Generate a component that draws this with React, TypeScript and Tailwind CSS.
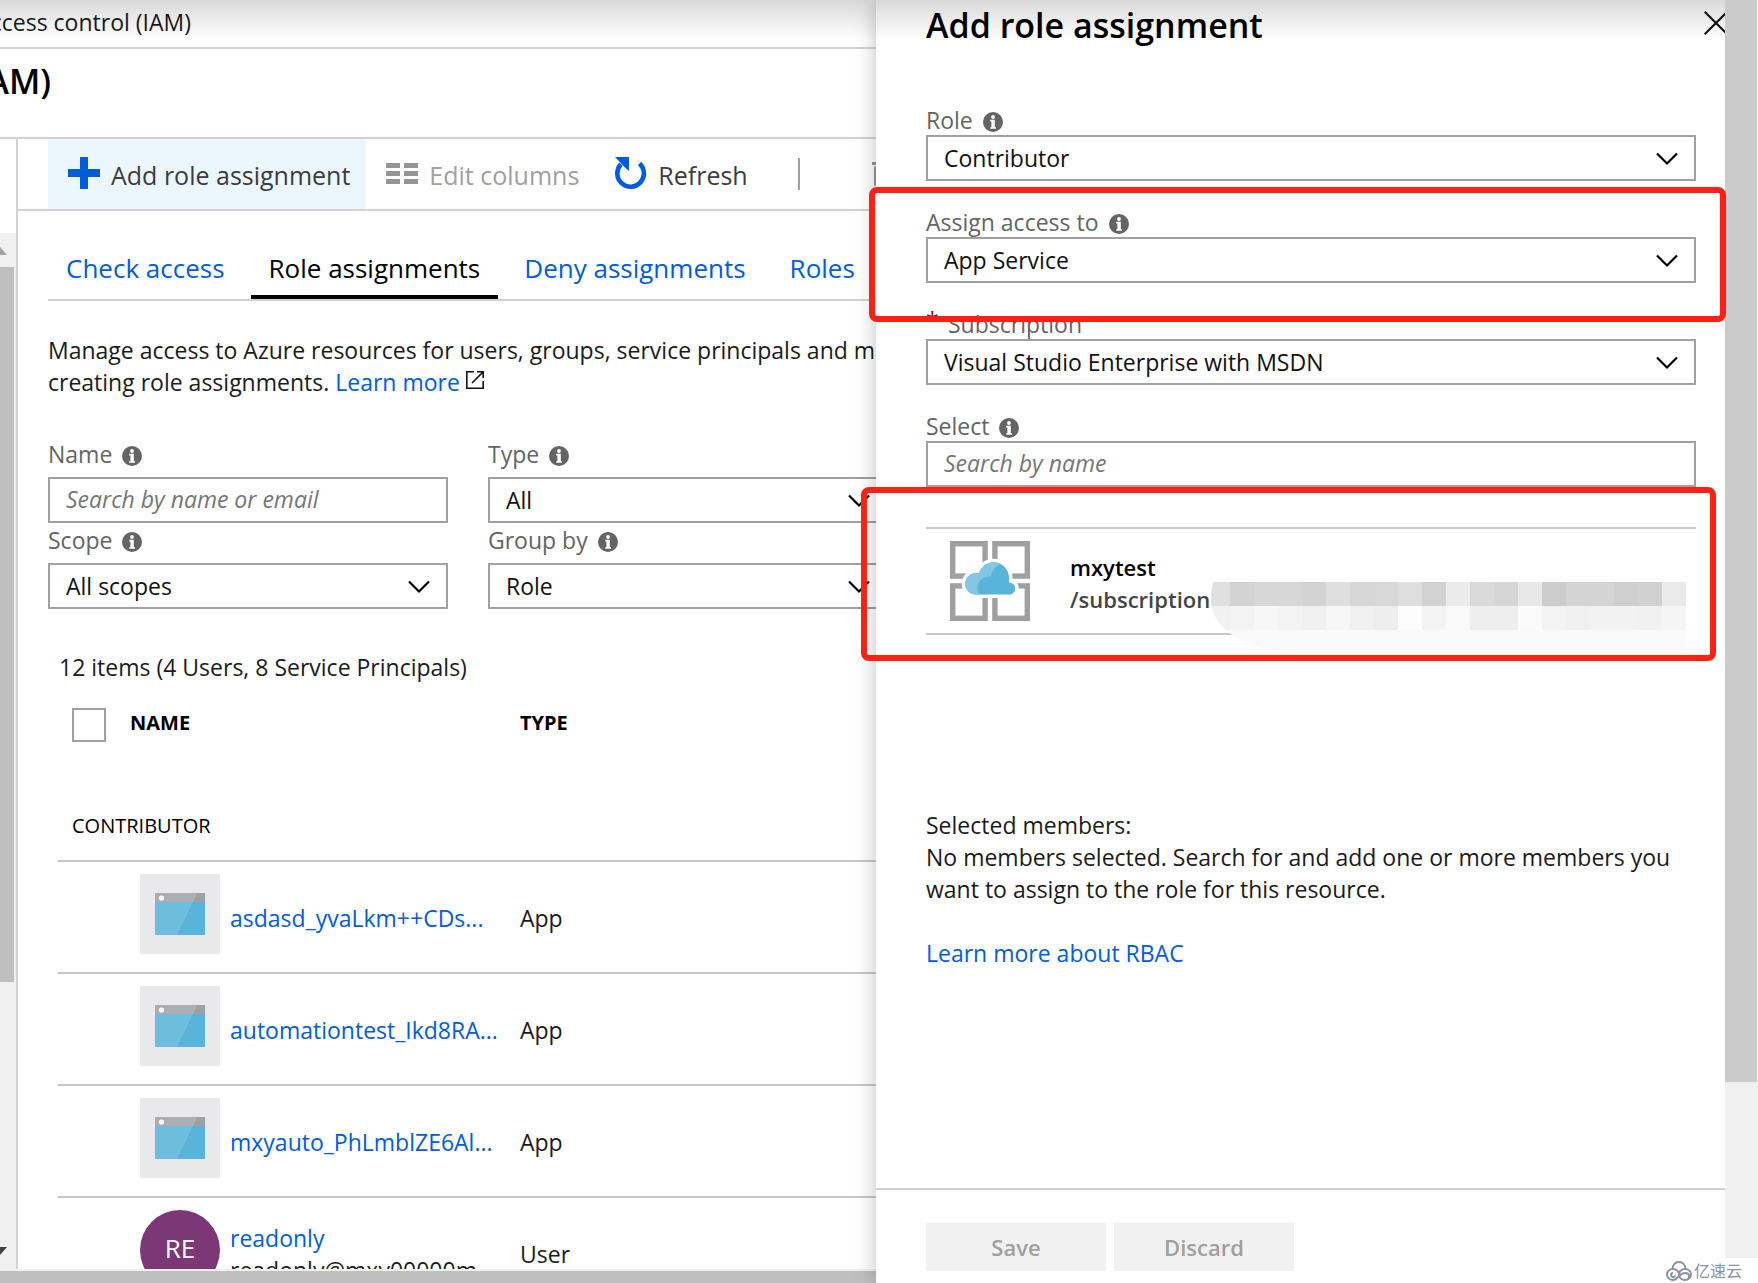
import React, { useState } from 'react';

interface FieldProps {
  id: string;
  label: string;
  info?: boolean;
  required?: boolean;
  labelClass: string;
  children: React.ReactNode;
}

interface Member {
  name: string;
  detail?: string;
  initials?: string;
  type: string;
}

const MEMBERS: Member[] = [
  { name: 'asdasd_yvaLkm++CDs...', type: 'App' },
  { name: 'automationtest_Ikd8RA...', type: 'App' },
  { name: 'mxyauto_PhLmblZE6Al...', type: 'App' },
  { name: 'readonly', detail: 'readonly@mxy00000m...', initials: 'RE', type: 'User' },
];

const TABS = ['Check access', 'Role assignments', 'Deny assignments', 'Roles'];

// Grey levels of the masked id, one row of blocks each
const MASK_TOP = ['#e0e0e0', '#d3d3d3', '#d7d7d7', '#d7d7d7', '#d3d3d3', '#dfdfdf', '#d7d7d7', '#d8d8d8', '#dedede', '#d2d2d2', '#ebebeb', '#dadada', '#d6d6d6', '#e8e8e8', '#cdcdcd', '#d4d4d4', '#d4d4d4', '#cfcfcf', '#d1d1d1', '#eaeaea'];
const MASK_BOTTOM = ['#f1f1f1', '#f3f3f3', '#f7f7f7', '#f4f4f4', '#f0f0f0', '#f6f6f6', '#f1f1f1', '#eeeeee', '#fdfdfd', '#f3f3f3', '#f9f9f9', '#eeeeee', '#eeeeee', '#fbfbfb', '#f3f3f3', '#f0f0f0', '#f2f2f2', '#f2f2f2', '#f1f1f1', '#f5f5f5'];

const InfoIcon = () => (
  <svg className="h-5 w-5 shrink-0" viewBox="0 0 20 20" aria-hidden="true">
    <circle cx="10" cy="10" r="10" fill="#646464" />
    <circle cx="10" cy="5" r="1.9" fill="#fff" />
    <path d="M7.200 7.800h4.600v7.400H13v1.600H7.200v-1.600h1.200V9.400H7.200z" fill="#fff" />
  </svg>
);

const Chevron = () => (
  <svg className="pointer-events-none absolute top-[17px] right-[18px] h-[14px] w-[22px]" viewBox="0 0 22 14" fill="none" aria-hidden="true">
    <path d="M1 1.5 11 11.5 21 1.5" stroke="#000" strokeWidth="2.2" />
  </svg>
);

const Field: React.FC<FieldProps> = ({ id, label, info = true, required, labelClass, children }) => (
  <div>
    <label htmlFor={id} className={`flex text-[#646464] ${labelClass}`}>
      {required && <span className="w-[22px] leading-5 text-[#a80000]">*</span>}
      <span className="mr-[10px] leading-7">{label}</span>
      {info && <span className="flex h-7 items-center pt-1"><InfoIcon /></span>}
    </label>
    {children}
  </div>
);

const Dropdown: React.FC<{ id: string; options: string[] }> = ({ id, options }) => (
  <div className="relative">
    <select id={id} className="block h-[46px] w-full appearance-none rounded-none border-2 border-[#a0a0a0] bg-white pr-12 pb-px pl-4 text-[#111]">
      {options.map(o => <option key={o}>{o}</option>)}
    </select>
    <Chevron />
  </div>
);

const SearchBox: React.FC<{ id: string; placeholder: string }> = ({ id, placeholder }) => (
  <input
    id={id}
    type="text"
    placeholder={placeholder}
    className="block h-[46px] w-full border-2 border-[#a0a0a0] bg-white px-4 pb-[3px] text-[#111] outline-none placeholder:text-[#767676] placeholder:italic"
  />
);

const AppIcon = () => (
  <svg className="h-20 w-20" viewBox="0 0 80 80" aria-hidden="true">
    <rect width="80" height="80" fill="#e9e9eb" />
    <rect x="15" y="19" width="50" height="42" rx="1" fill="#59b4d9" />
    <path d="M15 28V20q0-1 1-1h48q1 0 1 1v8z" fill="#a0a1a2" />
    <path d="M15 28h38L37 61H16q-1 0-1-1z" fill="#fff" opacity=".12" />
    <path d="M15 28v-8q0-1 1-1h41l-4 9z" fill="#fff" opacity=".14" />
    <circle cx="21.500" cy="24" r="2.600" fill="#fff" />
  </svg>
);

const AppServiceIcon = () => (
  <svg className="h-20 w-20 shrink-0" viewBox="0 0 80 80" aria-hidden="true">
    <g fill="none" stroke="#a0a0a0" strokeWidth="5.4">
      <rect x="2.700" y="2.700" width="32.400" height="32.400" />
      <rect x="44.900" y="2.700" width="32.400" height="32.400" />
      <rect x="2.700" y="44.900" width="32.400" height="32.400" />
      <rect x="44.900" y="44.900" width="32.400" height="32.400" />
    </g>
    <path
      d="M25 53.500A10.700 10.700 0 1 1 29 32.600C31 25.500 37 21.200 43.500 21.200 52 21.200 59 28 59 36.500V41.500C62.500 41.500 65.300 44 65.300 47.500S62.500 53.500 59.500 53.500Z"
      fill="#59b4d9"
      stroke="#fff"
      strokeWidth="7"
      paintOrder="stroke"
    />
    <path d="M25 53.500A10.700 10.700 0 1 1 29 32.600C31 25.500 37 21.200 43.500 21.200 46 21.200 48.500 21.900 50.500 23 45 25.500 41.500 30 41.200 35.500 33 35 27.500 40 27.500 46.500 27.500 49.500 28.500 52 30 53.500Z" fill="#84c7e2" />
  </svg>
);

const MaskedId = () => (
  <svg className="absolute top-[53px] left-[285px] h-[72px] w-[485px]" viewBox="5 0 485 72" aria-hidden="true">
    <clipPath id="mask-edge">
      <path d="M7 0H490V72H90C45 68 5 50 5 18Q5 8 7 0Z" />
    </clipPath>
    <g clipPath="url(#mask-edge)">
      {MASK_TOP.map((c, i) => <rect key={i} x={i * 24} y="0" width="24" height="24" fill={c} shapeRendering="crispEdges" />)}
      {MASK_BOTTOM.map((c, i) => <rect key={i} x={i * 24} y="24" width="24" height="24" fill={c} shapeRendering="crispEdges" />)}
      <rect y="48" width="480" height="18" fill="#fafafa" />
      <rect y="66" width="480" height="6" fill="#fdfdfd" />
      <rect x="480" y="48" width="10" height="18" fill="#fefefe" />
    </g>
  </svg>
);

const Avatar: React.FC<{ initials?: string }> = ({ initials }) =>
  initials ? (
    <span className="flex h-20 w-20 items-center justify-center rounded-full bg-[#7c3776] pb-1 text-[26px] text-white">{initials}</span>
  ) : (
    <AppIcon />
  );

const Toolbar = () => (
  <div className="flex h-[72px] items-stretch border-b-2 border-[#d2d2d2] pl-[30px] text-[25px] text-[#3c3c3c]">
    <button className="flex shrink-0 items-center gap-[11px] bg-[#ebf6fd] pt-[2px] pr-4 pl-5">
      <svg className="mb-1 h-8 w-8" viewBox="0 0 32 32" aria-hidden="true">
        <path d="M12 0h8v12h12v8H20v12h-8V20H0v-8h12z" fill="#015cda" />
      </svg>
      Add role assignment
    </button>
    <button disabled className="flex shrink-0 items-center gap-[11px] pt-[2px] pr-4 pl-5 text-[#a0a0a0]">
      <svg className="mb-1 h-[21px] w-8" viewBox="0 0 32 21" fill="#969696" aria-hidden="true">
        <path d="M0 0h14v5H0zM18 0h14v5H18zM0 8h14v5H0zM18 8h14v5H18zM0 16h14v5H0zM18 16h14v5H18z" />
      </svg>
      Edit columns
    </button>
    <button className="flex shrink-0 items-center gap-[11px] pt-[2px] pr-4 pl-5">
      <svg className="mb-1 h-8 w-8" viewBox="0 0 32 32" fill="none" aria-hidden="true">
        <path d="M24.500 6.500A13.300 13.300 0 1 1 6 7.200" stroke="#015cda" strokeWidth="4.600" />
        <path d="M0 0h14v14L9 9.500z" fill="#015cda" />
      </svg>
      Refresh
    </button>
    <span className="my-[19px] ml-[34px] w-[2px] shrink-0 bg-[#a0a0a0]" />
    <button disabled className="ml-[72px] flex shrink-0 items-center" aria-label="Remove">
      <svg className="h-6 w-6" viewBox="0 0 24 24" fill="none" stroke="#969696" strokeWidth="3" aria-hidden="true">
        <path d="M0 1.500h24M3.500 4.500V22h17V4.500" />
      </svg>
    </button>
  </div>
);

const NavScrollbar = () => (
  <div className="flex w-[18px] shrink-0 flex-col border-r-2 border-[#d2d2d2] pt-[94px]">
    <div className="flex min-h-0 flex-1 flex-col bg-[#f0f0f0]">
      <svg className="mt-[14px] h-2 w-[7px] shrink-0" viewBox="0 0 7 8" aria-hidden="true"><path d="M0 0 7 8H0z" fill="#a0a0a0" /></svg>
      <span className="mt-3 mr-[2px] h-[69%] bg-[#bfbfbf]" />
      <svg className="mt-auto mb-[14px] h-2 w-[7px] shrink-0" viewBox="0 0 7 8" aria-hidden="true"><path d="M0 0h7L0 8z" fill="#444" /></svg>
    </div>
  </div>
);

const RoleAssignments = () => {
  const [tab, setTab] = useState('Role assignments');

  return (
    <main className="flex min-w-0 flex-1 flex-col overflow-hidden whitespace-nowrap">
      <div className="flex h-[49px] shrink-0 items-center border-b-2 border-[#d2d2d2] pb-1">
        <div className="flex w-[191px] justify-end">Access control (IAM)</div>
      </div>
      <div className="flex h-[90px] shrink-0 items-start border-b-2 border-[#d2d2d2] pt-2">
        <h1 className="flex w-[51px] justify-end text-[34px] leading-[48px] font-semibold text-black">Access control (IAM)</h1>
      </div>

      <div className="flex min-h-0 flex-1">
        <NavScrollbar />
        <div className="min-w-0 flex-1 overflow-hidden">
          <Toolbar />
          <div className="w-[1100px] pt-[30px] pl-[30px]">
            <div className="flex h-[60px] gap-2 border-b-2 border-[#d2d2d2] text-[26px]" role="tablist">
              {TABS.map(t => (
                <button
                  key={t}
                  role="tab"
                  aria-selected={t === tab}
                  onClick={() => setTab(t)}
                  className={`border-b-4 px-[18px] ${t === tab ? 'border-black text-black' : 'border-transparent text-[#015cda]'}`}
                >
                  {t}
                </button>
              ))}
            </div>

            <p className="mt-[33px]">
              Manage access to Azure resources for users, groups, service principals and managed identities
              <br />
              creating role assignments. <a href="#learn" className="text-[#015cda]">Learn more
                <svg className="ml-[6px] inline h-[18px] w-[18px] align-[2px]" viewBox="0 0 18 18" fill="none" stroke="#111" strokeWidth="1.600" aria-hidden="true">
                  <path d="M8 .8H.8v16.400h16.400V10M6 12 17 1M11 .8h6.200V7" />
                </svg>
              </a>
            </p>

            <div className="mt-[39px] grid grid-cols-[400px_400px] gap-x-10">
              <Field id="name" label="Name" labelClass="h-10 pt-[3px]"><SearchBox id="name" placeholder="Search by name or email" /></Field>
              <Field id="type" label="Type" labelClass="h-10 pt-[3px]"><Dropdown id="type" options={['All']} /></Field>
              <Field id="scope" label="Scope" labelClass="h-10 pt-[3px]"><Dropdown id="scope" options={['All scopes']} /></Field>
              <Field id="group" label="Group by" labelClass="h-10 pt-[3px]"><Dropdown id="group" options={['Role']} /></Field>
            </div>

            <p className="mt-[42px] mb-[2px] pl-[11px]">12 items (4 Users, 8 Service Principals)</p>

            <table className="ml-[10px] w-full table-fixed border-collapse text-left">
              <colgroup>
                <col className="w-[72px]" />
                <col className="w-[390px]" />
                <col />
              </colgroup>
              <thead>
                <tr className="h-20 text-[20px] text-black">
                  <th className="pl-[14px]">
                    <input type="checkbox" aria-label="Select all" className="block h-[34px] w-[34px] appearance-none border-2 border-[#a0a0a0] bg-white checked:bg-[#015cda]" />
                  </th>
                  <th className="pb-1 font-bold">NAME</th>
                  <th className="pb-1 font-bold">TYPE</th>
                </tr>
              </thead>
              <tbody>
                <tr className="h-24 border-b-2 border-[#c8c8c8]">
                  <th colSpan={3} className="pt-[26px] pl-[14px] text-[20px] font-medium text-black">CONTRIBUTOR</th>
                </tr>
                {MEMBERS.map(m => (
                  <tr key={m.name} className="h-[112px] border-b-2 border-[#c8c8c8]">
                    <td />
                    <td className="p-0">
                      <div className="flex items-center gap-[10px] pl-[10px]">
                        <div className="mb-[6px]"><Avatar initials={m.initials} /></div>
                        <div className="pt-[2px]">
                          <a href="#member" className="block text-[#015cda]">{m.name}</a>
                          {m.detail && <div>{m.detail}</div>}
                        </div>
                      </div>
                    </td>
                    <td className="p-0 pt-[2px]">{m.type}</td>
                  </tr>
                ))}
              </tbody>
            </table>
          </div>
        </div>
      </div>

      <div className="h-[14px] shrink-0 border-t-2 border-[#f0f0f0] bg-[#bfbfbf]" />
    </main>
  );
};

const AddRolePanel = () => (
  <aside className="relative z-10 flex shrink-0 basis-[882px] shadow-[0_0_20px_rgba(0,0,0,0.25)]">
    <div className="flex min-w-0 flex-1 flex-col bg-white">
      <header className="flex h-[52px] shrink-0 items-center justify-between overflow-hidden pb-[2px] pl-[50px]">
        <h2 className="text-[34px] font-semibold text-black">Add role assignment</h2>
        <button aria-label="Close" className="-mr-[3px] mb-1">
          <svg className="h-6 w-6" viewBox="0 0 24 24" stroke="#111" strokeWidth="2" aria-hidden="true"><path d="M.7.7 23.300 23.300M23.300.7.7 23.300" /></svg>
        </button>
      </header>

      <div className="flex flex-col pt-[51px] pr-[29px] pl-[50px]">
        <div className="flex flex-col gap-6">
          <Field id="role" label="Role" labelClass="h-8 pt-[3px]"><Dropdown id="role" options={['Contributor']} /></Field>
          <div className="relative">
            <Field id="assign" label="Assign access to" labelClass="h-8 pt-[3px]"><Dropdown id="assign" options={['App Service']} /></Field>
            <div className="pointer-events-none absolute -top-[18px] -right-[30px] -bottom-[39px] -left-[57px] z-10 rounded-lg border-[6px] border-[#fd2015]" />
          </div>
          <Field id="subscription" label="Subscription" info={false} required labelClass="h-8 pt-[3px]">
            <Dropdown id="subscription" options={['Visual Studio Enterprise with MSDN']} />
          </Field>
          <Field id="select" label="Select" labelClass="h-8 pt-[3px]"><SearchBox id="select" placeholder="Search by name" /></Field>
        </div>

        <div className="relative mt-10 flex h-[108px] items-center border-y-2 border-[#c8c8c8] pl-6">
          <AppServiceIcon />
          <div className="pt-1 pl-10 text-[22px] leading-8 font-semibold">
            <div className="text-black">mxytest</div>
            <div className="text-[#444]">/subscription</div>
          </div>
          <MaskedId />
          <div className="pointer-events-none absolute -top-[42px] -right-[20px] -bottom-[28px] -left-[65px] rounded-lg border-[6px] border-[#fd2015]" />
        </div>

        <div className="mt-[174px]">
          <p>Selected members:</p>
          <p>No members selected. Search for and add one or more members you want to assign to the role for this resource.</p>
          <a href="#rbac" className="mt-8 inline-block text-[#015cda]">Learn more about RBAC</a>
        </div>
      </div>

      <footer className="mt-auto flex gap-2 border-t-2 border-[#d2d2d2] pt-[33px] pb-3 pl-[50px] text-[22px] font-semibold text-[#a0a0a0]">
        <button disabled className="h-12 w-[180px] bg-[#f1f1f1]">Save</button>
        <button disabled className="h-12 w-[180px] bg-[#f1f1f1]">Discard</button>
      </footer>
    </div>

    <div className="mb-[25px] w-[33px] shrink-0 bg-[#f0f0f0] pr-px">
      <div className="h-[86%] bg-[#cbcbcb]" />
    </div>

    {/* Watermark */}
    <div className="absolute right-4 bottom-0 flex items-center gap-[2px] text-[16px] leading-6 text-[#8a92a3]">
      <svg className="h-5 w-[26px]" viewBox="0 0 26 20" fill="none" stroke="#8a92a3" strokeWidth="2" aria-hidden="true">
        <path d="M6.500 8.500C6.500 4 9 1 13 1s6.500 3 6.500 7.500" />
        <path d="M13 13.500C13 10.500 10.500 8 7 8S1 10.500 1 13.500 3.500 19 7 19c5 0 6-7 12-7 5 0 6 7 0 7-3.500 0-6-2.500-6-5.500S15.500 8 19 8s6 2.500 6 5.500-2.500 5.500-6 5.500" />
        <path d="M7 12a2 2 0 1 0 2 2.500" />
      </svg>
      亿速云
    </div>
  </aside>
);

export default function App() {
  return (
    <div className="relative flex h-screen overflow-hidden bg-white font-['Open_Sans','Noto_Sans_CJK_SC',sans-serif] text-[23px] leading-8 text-[#1b1b1b]">
      <RoleAssignments />
      <AddRolePanel />
      <div className="pointer-events-none absolute top-0 right-[33px] left-0 z-20 h-10 bg-linear-to-b from-black/15 to-transparent" />
    </div>
  );
}
